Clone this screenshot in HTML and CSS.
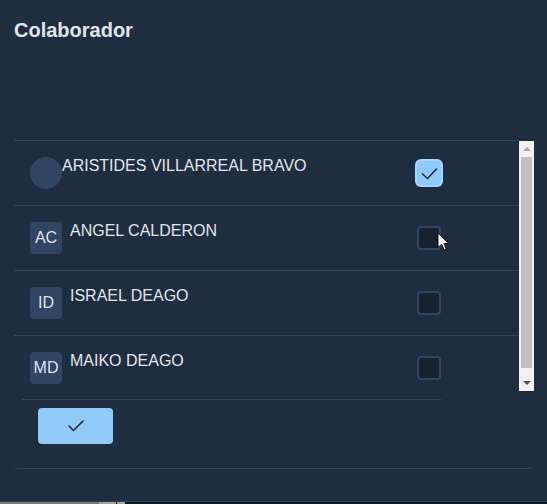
FILE: index.html
```html
<!DOCTYPE html>
<html lang="es">
<head>
<meta charset="utf-8">
<title>Colaborador</title>
<link rel="stylesheet" href="styles.css">
</head>
<body>
<div class="screen">
  <h1 class="title">Colaborador</h1>
  <div class="card">
    <div class="listbox">
      <div class="list">
        <div class="row">
          <div class="who">
            <span class="avatar circle"></span>
            <span class="name flush">ARISTIDES VILLARREAL BRAVO</span>
          </div>
          <span class="cb checked">
            <svg viewBox="0 0 24 24" width="24" height="24"><path d="M5.5 13 L10.5 17.5 L19.5 8" fill="none" stroke="#1f2937" stroke-width="1.6" stroke-linecap="round" stroke-linejoin="round"/></svg>
          </span>
        </div>
        <div class="row">
          <div class="who">
            <span class="avatar">AC</span>
            <span class="name">ANGEL CALDERON</span>
          </div>
          <span class="cb"></span>
        </div>
        <div class="row">
          <div class="who">
            <span class="avatar">ID</span>
            <span class="name">ISRAEL DEAGO</span>
          </div>
          <span class="cb"></span>
        </div>
        <div class="row">
          <div class="who">
            <span class="avatar">MD</span>
            <span class="name">MAIKO DEAGO</span>
          </div>
          <span class="cb"></span>
        </div>
      </div>
      <div class="vscroll" aria-hidden="true">
        <span class="arrow up"></span>
        <span class="thumb"></span>
        <span class="arrow down"></span>
      </div>
    </div>
    <div class="footer">
      <button class="ok" type="button" aria-label="Aceptar">
        <svg viewBox="0 0 18 14" width="18" height="14"><path d="M2 7 L6.5 11.5 L16 2" fill="none" stroke="#1f2937" stroke-width="1.6" stroke-linecap="round" stroke-linejoin="round"/></svg>
      </button>
    </div>
  </div>
  <div class="strip">
    <span class="seg seg-a"></span><span class="seg seg-b"></span><span class="seg seg-c"></span><span class="seg seg-d"></span>
  </div>
  <svg class="cursor" viewBox="0 0 13 20" width="13" height="20"><path d="M1 1 L1 15.5 L4.6 12.2 L7.2 18 L9.4 17 L6.9 11.4 L11.6 11.4 Z" fill="#ffffff" stroke="#111111" stroke-width="1" stroke-linejoin="round"/></svg>
</div>
</body>
</html>
```

FILE: styles.css
```css
* { box-sizing: border-box; }

html, body {
  margin: 0;
  padding: 0;
  background: #1f2d40;
}

body {
  font-family: "Liberation Sans", Arial, sans-serif;
  color: rgba(255, 255, 255, 0.87);
  width: 547px;
  height: 504px;
  overflow: hidden;
}

.screen {
  position: relative;
  display: flow-root;
  padding: 0 13px 0 14px;
}

.title {
  margin: 19px 0 0;
  font-size: 20px;
  line-height: 23px;
  font-weight: 700;
  color: #e1e6ec;
}

.card {
  margin-top: 98px;
  width: 520px;
  border-bottom: 1px solid #304562;
  border-radius: 0 0 5px 5px;
}

.listbox {
  display: flex;
  align-items: flex-start;
  height: 251px;
}

.list {
  width: 505px;
  height: 250px;
  overflow: hidden;
}

.row {
  display: flex;
  align-items: center;
  height: 65px;
  padding: 0 16px;
  border-top: 1px solid #304562;
}

.who {
  width: 387px;
  display: flex;
  align-items: flex-start;
  align-self: flex-start;
  padding-top: 16px;
}

.avatar {
  flex: 0 0 32px;
  width: 32px;
  height: 32px;
  border-radius: 4px;
  background: #304562;
  color: rgba(255, 255, 255, 0.87);
  font-size: 16px;
  display: flex;
  align-items: center;
  justify-content: center;
}

.avatar.circle {
  border-radius: 50%;
}

.name {
  margin: 0 0 0 8px;
  font-size: 16px;
  color: #e2e5e9;
}

.name.flush {
  margin-left: 0;
}

.cb {
  width: 24px;
  height: 24px;
  border: 2px solid #304562;
  border-radius: 4px;
  background: #17212f;
  display: flex;
  align-items: center;
  justify-content: center;
}

.cb svg {
  display: block;
  margin: -2px;
}

.cb.checked {
  background: #90caf9;
  border-color: #90caf9;
  box-shadow: 0 0 0 2px #a9d6fb;
}

/* static scrollbar track */
.vscroll {
  margin-top: 1px;
  width: 15px;
  height: 250px;
  background: #f1f1f1;
  display: flex;
  flex-direction: column;
  align-items: center;
}

.arrow {
  width: 0;
  height: 0;
  border-left: 4px solid transparent;
  border-right: 4px solid transparent;
}

.arrow.up {
  margin-top: 6px;
  border-bottom: 4px solid #a3a3a3;
}

.thumb {
  margin-top: 6px;
  width: 11px;
  height: 211px;
  background: #c1c1c1;
}

.arrow.down {
  margin-top: 13px;
  border-top: 4px solid #505050;
}

.footer {
  margin: 8px 0 0 8px;
  width: 419px;
  border-top: 1px solid #304562;
  padding: 8px 16px 24px;
}

.ok {
  width: 75px;
  height: 36px;
  border: 0;
  border-radius: 4px;
  background: #90caf9;
  display: flex;
  align-items: center;
  justify-content: center;
  padding: 0;
}

.ok svg {
  display: block;
}

.strip {
  margin: 32px -13px 0 -14px;
  border-top: 1px solid #2e4159;
  height: 3px;
  display: flex;
  background: #0e1724;
}

.seg { display: block; height: 100%; }
.seg-a { width: 99px; background: #7a7a7a; }
.seg-b { width: 17px; background: #a4a4a4; }
.seg-c { width: 1px; background: #1a1a1a; }
.seg-d { width: 8px; background: #a4a4a4; }

.cursor {
  position: absolute;
  left: 437px;
  top: 232px;
}
```
